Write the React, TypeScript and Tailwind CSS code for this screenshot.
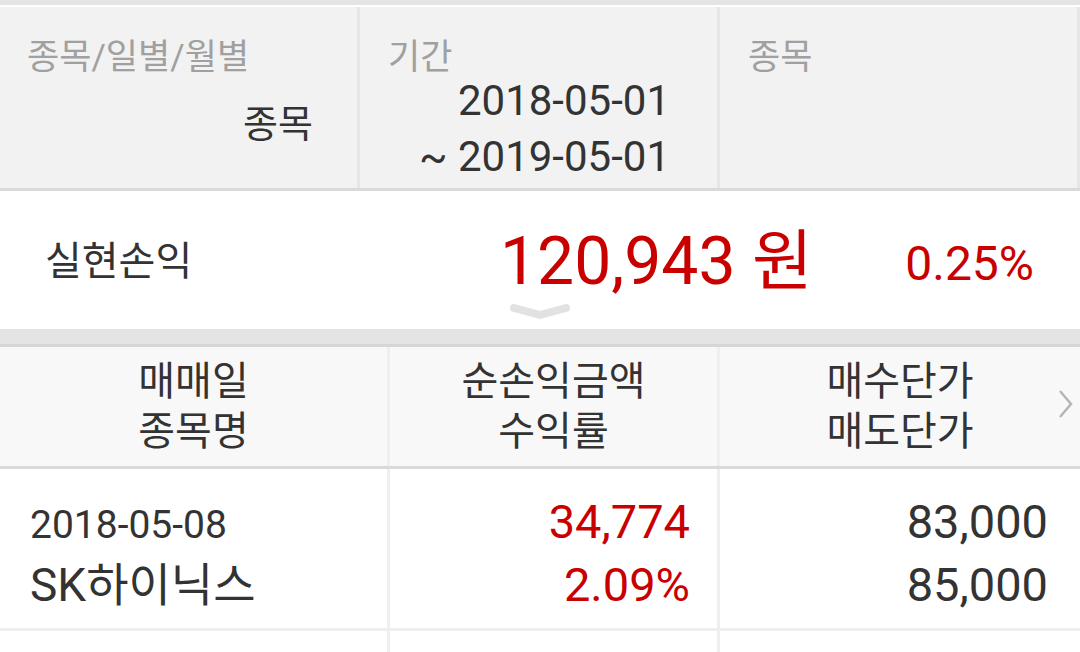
import React from 'react'

const font = { fontFamily: 'Roboto, "Noto Sans CJK KR", sans-serif' }

function Chevron() {
  return (
    <svg width="62" height="18" viewBox="0 0 62 18" className="absolute left-[509px] top-[302px]">
      <path d="M5 6 L31 13 L57 6" fill="none" stroke="#e2e2e2" strokeWidth="8" strokeLinecap="round" strokeLinejoin="round" />
    </svg>
  )
}

export default function App() {
  return (
    <div className="relative w-[1080px] h-[652px] overflow-hidden bg-white text-[#333]" style={font}>
      <div className="h-[5px] bg-[#e4e4e4]" />
      <div className="h-[2px] bg-white" />

      {/* 조회 조건 */}
      <div className="flex h-[184px] bg-[#f2f2f2] border-b-[3px] border-[#dadada]">
        <div className="w-[360px] border-r-[3px] border-[#e6e6e6] flex flex-col">
          <div className="pl-[27px] pt-[31px] text-[35px] leading-[40px] text-[#a0a0a0]">종목/일별/월별</div>
          <div className="pr-[44px] pt-[24px] text-right text-[38px] leading-[44px]">종목</div>
        </div>
        <div className="w-[360px] border-r-[3px] border-[#e6e6e6] flex flex-col">
          <div className="pl-[28px] pt-[31px] text-[35px] leading-[40px] text-[#a0a0a0]">기간</div>
          <div className="pr-[47px] -mt-[5px] text-right text-[42px] leading-[56px]">
            <div>2018-05-01</div>
            <div>~ 2019-05-01</div>
          </div>
        </div>
        <div className="flex-1 border-r-[3px] border-[#e6e6e6]">
          <div className="pl-[28px] pt-[31px] text-[35px] leading-[40px] text-[#a0a0a0]">종목</div>
        </div>
      </div>

      {/* 실현손익 */}
      <div className="flex items-center h-[138px] pt-[4px]">
        <div className="pl-[45px] w-[500px] text-[40px] leading-[48px]">실현손익</div>
        <div className="w-[330px] text-[66px] leading-[74px] text-[#c80000]">120,943 원</div>
        <div className="flex-1 pr-[46px] pt-[4px] text-right text-[48px] leading-[52px] text-[#c80000]">0.25%</div>
      </div>
      <Chevron />

      <div className="h-[15px] bg-[#e4e4e4]" />
      <div className="h-[3px] bg-[#d6d6d6]" />

      {/* 헤더 */}
      <div className="flex h-[122px] bg-[#f8f8f8] border-b-[3px] border-[#dadada] text-[40px] leading-[50px]">
        <div className="w-[390px] border-r-[3px] border-[#efefef] flex flex-col items-center justify-center">
          <div>매매일</div>
          <div>종목명</div>
        </div>
        <div className="w-[330px] border-r-[3px] border-[#efefef] flex flex-col items-center justify-center">
          <div>순손익금액</div>
          <div>수익률</div>
        </div>
        <div className="relative flex-1 flex flex-col items-center justify-center">
          <div>매수단가</div>
          <div>매도단가</div>
          <svg width="20" height="32" viewBox="0 0 20 32" className="absolute right-[4px] top-[41px]">
            <path d="M4 3 L15 16 L4 29" fill="none" stroke="#b5b5b5" strokeWidth="2.5" />
          </svg>
        </div>
      </div>

      {/* 행 */}
      <div className="flex h-[162px] border-b-[3px] border-[#efefef]">
        <div className="w-[390px] border-r-[3px] border-[#efefef] pl-[30px] pt-[32px]">
          <div className="text-[39px] leading-[48px]">2018-05-08</div>
          <div className="text-[46px] leading-[60px] mt-[6px]">SK하이닉스</div>
        </div>
        <div className="w-[330px] border-r-[3px] border-[#efefef] pr-[27px] pt-[21px] text-right text-[47px] leading-[63px] text-[#c80000]">
          <div>34,774</div>
          <div>2.09%</div>
        </div>
        <div className="flex-1 pr-[32px] pt-[21px] text-right text-[47px] leading-[63px]">
          <div>83,000</div>
          <div>85,000</div>
        </div>
      </div>

      <div className="flex h-[40px]">
        <div className="w-[390px] border-r-[3px] border-[#efefef]" />
        <div className="w-[330px] border-r-[3px] border-[#efefef]" />
        <div className="flex-1" />
      </div>
    </div>
  )
}
